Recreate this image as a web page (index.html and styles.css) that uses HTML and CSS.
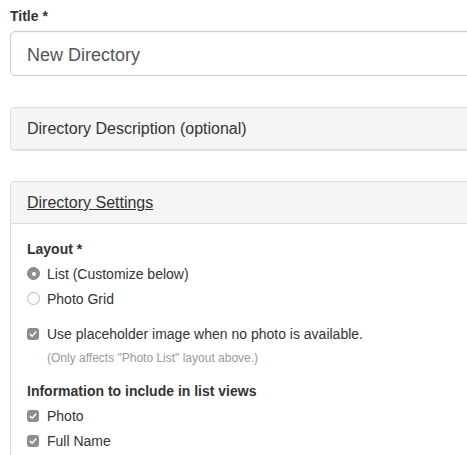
FILE: index.html
```html
<!DOCTYPE html>
<html>
<head>
<meta charset="utf-8">
<link rel="stylesheet" href="styles.css">
</head>
<body>
<div class="viewport">
<div class="page">
  <label class="field-label">Title *</label>
  <div class="input">New Directory</div>

  <div class="panel collapsed">
    <div class="panel-heading">Directory Description (optional)</div>
  </div>

  <div class="panel">
    <div class="panel-heading"><a class="heading-link">Directory Settings</a></div>
    <div class="panel-body">
      <div class="group-label">Layout *</div>
      <div class="option radio-opt"><span class="radio checked"></span><span>List (Customize below)</span></div>
      <div class="option radio-opt"><span class="radio"></span><span>Photo Grid</span></div>
      <div class="option check-opt"><span class="checkbox"><svg viewBox="0 0 12 12" width="12" height="12"><path d="M3.2 6.3 L5.1 8.2 L8.8 4" fill="none" stroke="#fff" stroke-width="1.5" stroke-linecap="round" stroke-linejoin="round"/></svg></span><span>Use placeholder image when no photo is available.</span></div>
      <div class="help">(Only affects "Photo List" layout above.)</div>
      <div class="group-label info">Information to include in list views</div>
      <div class="option"><span class="checkbox"><svg viewBox="0 0 12 12" width="12" height="12"><path d="M3.2 6.3 L5.1 8.2 L8.8 4" fill="none" stroke="#fff" stroke-width="1.5" stroke-linecap="round" stroke-linejoin="round"/></svg></span><span>Photo</span></div>
      <div class="option"><span class="checkbox"><svg viewBox="0 0 12 12" width="12" height="12"><path d="M3.2 6.3 L5.1 8.2 L8.8 4" fill="none" stroke="#fff" stroke-width="1.5" stroke-linecap="round" stroke-linejoin="round"/></svg></span><span>Full Name</span></div>
    </div>
  </div>
</div>
</div>
</body>
</html>
```
FILE: styles.css
```css
html, body {
  margin: 0;
  padding: 0;
  background: #fff;
}
body {
  font-family: "Liberation Sans", Arial, sans-serif;
  color: #333;
  font-size: 14px;
}
.viewport {
  width: 100%;
  height: 455px;
  overflow: hidden;
}
.page {
  width: 540px;
  padding: 6px 0 0 10px;
}
.field-label {
  display: block;
  font-weight: bold;
  font-size: 14px;
  line-height: 20px;
  margin-bottom: 5px;
}
.input {
  border: 1px solid #ccc;
  border-radius: 5px;
  padding: 2px 16px 0;
  box-sizing: content-box;
  height: 41px;
  font-size: 18px;
  line-height: 43px;
  color: #555;
  box-shadow: inset 0 1px 1px rgba(0,0,0,0.05);
}
.panel {
  margin-top: 31px;
  border: 1px solid #ddd;
  border-radius: 4px;
  box-shadow: 0 1px 1px rgba(0,0,0,0.1);
  background: #fff;
}
.panel-heading {
  background: #f5f5f5;
  height: 41px;
  line-height: 41px;
  padding: 0 16px;
  font-size: 16px;
  color: #333;
  border-radius: 4px 4px 0 0;
}
.collapsed .panel-heading {
  border-radius: 4px;
}
.panel .panel-body {
  border-top: 1px solid #ddd;
  padding: 14px 16px 20px;
}
.heading-link {
  color: #333;
  text-decoration: underline;
}
.group-label {
  font-weight: bold;
  line-height: 22px;
  margin-bottom: 1px;
}
.group-label.info {
  margin-top: 13px;
  margin-bottom: 1px;
}
.option {
  display: flex;
  align-items: center;
  height: 25px;
  gap: 8px;
}
.radio-opt {
  gap: 7px;
}
.check-opt {
  margin-top: 10px;
}
.radio {
  width: 13px;
  height: 13px;
  border-radius: 50%;
  border: 1px solid #b5b5b5;
  background: #fff;
  box-sizing: border-box;
  flex: none;
  display: flex;
  align-items: center;
  justify-content: center;
}
.radio.checked {
  background: #8e8e8e;
  border-color: #858585;
}
.radio.checked::after {
  content: "";
  width: 4px;
  height: 4px;
  border-radius: 50%;
  background: #fff;
}
.checkbox {
  width: 12px;
  height: 12px;
  border-radius: 3px;
  background: #8e8e8e;
  flex: none;
  display: flex;
}
.help {
  margin-top: 3px;
  padding-left: 20px;
  font-size: 12px;
  color: #999;
  line-height: 18px;
}
```
